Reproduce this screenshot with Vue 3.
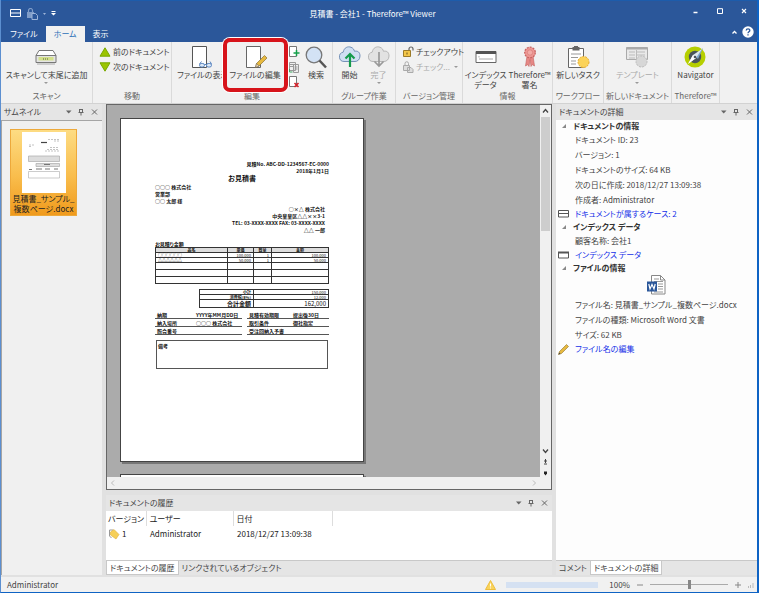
<script setup>
import { ref } from 'vue'

const tabs = ['ファイル', 'ホーム', '表示']
const activeTab = ref('ホーム')
const zoom = ref(50)
const details = [
  {
    title: 'ドキュメントの情報',
    items: ['ドキュメント ID: 23', 'バージョン: 1', 'ドキュメントのサイズ: 64 KB', '次の日に作成: 2018/12/27 13:09:38', '作成者: Administrator'],
    link: 'ドキュメントが属するケース: 2',
    icon: 'case'
  },
  { title: 'インデックス データ', items: ['顧客名称:  会社1'], link: 'インデックス データ', icon: 'index' },
  {
    title: 'ファイルの情報',
    word: true,
    items: ['ファイル名: 見積書_サンプル_複数ページ.docx', 'ファイルの種類: Microsoft Word 文書', 'サイズ: 62 KB'],
    link: 'ファイル名の編集',
    icon: 'pencil'
  }
]
const lines = [
  ['○○○○○○', '100,000', '1', '100,000'],
  ['△△△△△△', '50,000', '1', '50,000']
]
const terms = [
  [['納期', 'YYYY年MM月DD日'], ['納入場所', '○○○ 株式会社'], ['照会番号', '']],
  [['見積有効期限', '提出後30日'], ['取引条件', '御社指定'], ['受注回納入予書', '']]
]
</script>

<template>
  <div class="window">
    <header class="titlebar">
      <div class="quick">
        <button class="bare" aria-label="ケース">
          <svg width="11" height="9" viewBox="0 0 11 9" fill="none" stroke="#fff"><path d="M.5.5h10v7H.5zM.5 4h10" /></svg>
        </button>
        <button class="bare" aria-label="チェックイン">
          <svg width="12" height="12" viewBox="0 0 12 12"><path d="M2.500 5V2.500a2 2 0 0 1 4 0V5" fill="none" stroke="#7f9cc8" stroke-width="1.200" /><path d="M1 4h7v6H1z" fill="#7f9cc8" /><path d="M6 5.500h3.500l2 2v4H6z" fill="#2b579a" stroke="#9db4d8" /></svg>
        </button>
        <svg width="3" height="2" viewBox="0 0 3 2"><path d="M0 0h3L1.500 2z" fill="#9db4d8" /></svg>
        <button class="bare" aria-label="カスタマイズ">
          <svg width="5" height="5" viewBox="0 0 5 5" fill="#fff"><path d="M.5 0h4v1h-4zM0 2h5L2.500 4.500z" /></svg>
        </button>
      </div>
      <div class="caption">見積書 - 会社1 - Therefore™ Viewer</div>
      <div class="winbtns">
        <button class="bare" aria-label="最小化"><svg width="6" height="6" viewBox="0 0 6 6"><path d="M.5 4.500h4" stroke="#fff" stroke-width="1.500" /></svg></button>
        <button class="bare" aria-label="最大化"><svg width="6" height="6" viewBox="0 0 6 6"><path d="M.5.7h5v4.800h-5z" fill="none" stroke="#fff" /></svg></button>
        <button class="bare" aria-label="閉じる"><svg width="6" height="6" viewBox="0 0 6 6"><path d="M1 1l4 4M5 1L1 5" stroke="#fff" stroke-width="1.100" /></svg></button>
      </div>
    </header>

    <nav class="tabbar">
      <button v-for="t in tabs" :key="t" class="tab" :class="{ active: t === activeTab }" @click="activeTab = t">{{ t }}</button>
      <div class="help">
        <button class="bare" aria-label="リボンを折りたたむ"><svg width="5" height="4" viewBox="0 0 5 4"><path d="M.5 3.500l2-2 2 2" fill="none" stroke="#fff" stroke-width="1.300" /></svg></button>
        <button class="bare" aria-label="ヘルプ"><svg width="12" height="12" viewBox="0 0 12 12"><circle cx="6" cy="6" r="5.700" fill="#fff" /><path d="M4.200 4.500c.1-2.200 3.700-2.100 3.600 0C7.800 5.800 6 5.800 6 7.300M6 8.300v1.200" fill="none" stroke="#2b579a" stroke-width="1.300" /></svg></button>
      </div>
    </nav>

    <section class="ribbon">
      <div class="group g-scan">
        <div class="tools">
          <button class="big">
            <svg width="22" height="24" viewBox="0 0 22 24"><path d="M4 4.500h14l3 5H1z" fill="#fff" stroke="#777" /><path d="M1 9.500h20v7H1z" fill="#e4e4e4" stroke="#777" /><path d="M3.500 11h15v3.500h-15z" fill="#d3e08a" /><path d="M8 13h6" stroke="#55603a" stroke-dasharray="1 1" /><path d="M2 18h18" stroke="#aaa" /></svg>
            <span>スキャンして末尾に追加</span><i class="drop"></i>
          </button>
        </div>
        <h2>スキャン</h2>
      </div>
      <div class="group g-move">
        <div class="tools stack">
          <button class="small"><svg width="12" height="10" viewBox="0 0 12 10"><path d="M6 .8l5 8.400H1z" fill="#9bc400" stroke="#78a800" /></svg>前のドキュメント</button>
          <button class="small"><svg width="12" height="10" viewBox="0 0 12 10"><path d="M6 9.200l5-8.400H1z" fill="#9bc400" stroke="#78a800" /></svg>次のドキュメント</button>
        </div>
        <h2>移動</h2>
      </div>
      <div class="group g-edit">
        <div class="tools">
          <button class="big view">
            <svg width="24" height="24" viewBox="0 0 24 24"><path d="M4.500 .5h14v21h-14z" fill="#fff" stroke="#555" /><path d="M13.500 15.500l-2 2.500M22 15.500l1.500 2.500" fill="none" stroke="#5a86c0" /><rect x="11.500" y="17.500" width="5" height="3.500" rx="1.700" fill="#dce8f6" stroke="#5a86c0" /><rect x="18.500" y="17.500" width="5" height="3.500" rx="1.700" fill="#dce8f6" stroke="#5a86c0" /><path d="M16.500 18.500h2" stroke="#5a86c0" /></svg>
            <span>ファイルの表示</span>
          </button>
          <button class="big marked">
            <svg width="24" height="24" viewBox="0 0 24 24"><path d="M3.500 .5h14v21h-14z" fill="#fff" stroke="#666" /><path d="M12.500 21.500l1-4 8-8 2.500 2.500-8 8z" fill="#e7b93f" stroke="#8b7132" stroke-width=".7" /><path d="M12.500 21.500l1-4 2.700 2.600z" fill="#eed8b0" stroke="#555" stroke-width=".5" /></svg>
            <span>ファイルの編集</span>
          </button>
          <div class="mini">
            <button class="bare" aria-label="ページの追加"><svg width="12" height="13" viewBox="0 0 12 13"><path d="M1.500 .5h7v10h-7z" fill="#fff" stroke="#777" /><path d="M8.500 4v6M5.500 7h6" stroke="#14a04a" stroke-width="1.500" /></svg></button>
            <button class="bare" aria-label="ページの置換"><svg width="12" height="13" viewBox="0 0 12 13"><path d="M1.500 1.500h6v8h-6zM5.500 3.500h5v8h-5z" fill="#eee" stroke="#999" /><path d="M2 3.500h4M2 5.500h3M6.500 6h3M6.500 8h3" stroke="#999" /><path d="M1.500 8v3h3" fill="none" stroke="#3da461" /></svg></button>
            <button class="bare" aria-label="ページの削除"><svg width="12" height="13" viewBox="0 0 12 13"><path d="M1.500 .5h7v10h-7z" fill="#fff" stroke="#777" /><path d="M6.500 7l4 4M10.500 7l-4 4" stroke="#d5202a" stroke-width="1.600" /></svg></button>
          </div>
          <button class="big find">
            <svg width="24" height="24" viewBox="0 0 24 24"><circle cx="10" cy="9" r="7.800" fill="#d3e2f5" stroke="#777" stroke-width="1.300" /><path d="M15.500 14.500l6.500 7" stroke="#555" stroke-width="2.500" /></svg>
            <span>検索</span>
          </button>
        </div>
        <h2>編集</h2>
      </div>
      <div class="group g-work">
        <div class="tools">
          <button class="big">
            <svg width="24" height="24" viewBox="0 0 24 24"><path d="M6 15.500a4.700 4.700 0 0 1-.8-9.300C6 1.500 10 0 13 1.300c2 .6 3 2.200 3.500 4 3.500-.8 5.500 1.200 5.500 4.700s-2.500 5.500-5 5.500z" fill="#cfdff2" stroke="#7692b8" /><path d="M12 21V9M7.500 12.500L12 8l4.500 4.500" fill="none" stroke="#159a4c" stroke-width="2.200" /></svg>
            <span>開始</span>
          </button>
          <button class="big off" disabled>
            <svg width="24" height="24" viewBox="0 0 24 24"><path d="M6 15.500a4.700 4.700 0 0 1-.8-9.300C6 1.500 10 0 13 1.300c2 .6 3 2.200 3.500 4 3.500-.8 5.500 1.200 5.500 4.700s-2.500 5.500-5 5.500z" fill="#e2e2e2" stroke="#b6b6b6" /><path d="M12 6v13M7.500 15.500L12 20l4.500-4.500" fill="none" stroke="#999" stroke-width="1.700" /></svg>
            <span>完了</span><i class="drop"></i>
          </button>
        </div>
        <h2>グループ作業</h2>
      </div>
      <div class="group g-version">
        <div class="tools stack">
          <button class="small"><svg width="12" height="12" viewBox="0 0 12 12"><path d="M7 5V3a2 2 0 0 1 4 0v1.500" fill="none" stroke="#666" stroke-width="1.200" /><path d="M1.500 4.500h7v6h-7z" fill="#f3c649" stroke="#9b7a28" /><path d="M5 6.500v2" stroke="#6b531a" /></svg>チェックアウト</button>
          <button class="small off" disabled><svg width="12" height="12" viewBox="0 0 12 12" fill="#ddd" stroke="#aaa"><path d="M3 5V2.500a1.700 1.700 0 0 1 3.500 0V5" fill="none" /><path d="M1.500 4.500h6v5h-6zM5.500 6.500h3.500l2 2v3H5.500z" /></svg>チェック... <i class="drop side"></i></button>
        </div>
        <h2>バージョン管理</h2>
      </div>
      <div class="group g-info">
        <div class="tools">
          <button class="big">
            <svg width="22" height="24" viewBox="0 0 22 24"><path d="M1 5.500h20v11H1z" fill="#fff" stroke="#666" /><path d="M1 5h20v3H1z" fill="#555" /><path d="M4 10v1.500M4 13h14" stroke="#aaa" /></svg>
            <span>インデックス<br>データ</span>
          </button>
          <button class="big">
            <svg width="16" height="24" viewBox="0 0 16 24"><path d="M5 10l-1.500 10 2.500-1.500 1 2 1-7 1 7 1-2 2.500 1.500L11 10z" fill="#e68885" stroke="#c2625f" stroke-width=".6" /><circle cx="8" cy="6.500" r="5.300" fill="#ee9793" stroke="#c76462" stroke-width="1.300" stroke-dasharray="2 1" /><circle cx="8" cy="6.500" r="2.700" fill="#f2aaa6" stroke="#d37572" stroke-width=".6" /></svg>
            <span>Therefore™<br>署名</span>
          </button>
        </div>
        <h2>情報</h2>
      </div>
      <div class="group g-flow">
        <div class="tools">
          <button class="big">
            <svg width="24" height="24" viewBox="0 0 24 24"><path d="M2.500 2.500h15v19h-15z" fill="#fff" stroke="#666" /><path d="M6.500 1h7v3.500h-7z" fill="#666" /><path d="M8 .5h4" stroke="#666" /><path d="M5 8h10M5 11.500h7M5 15h5M5 18h5" stroke="#999" /><circle cx="17.500" cy="16" r="5.500" fill="#fbd35a" stroke="#e5a92b" stroke-dasharray="2 1" /></svg>
            <span>新しいタスク</span>
          </button>
        </div>
        <h2>ワークフロー</h2>
      </div>
      <div class="group g-new">
        <div class="tools">
          <button class="big off" disabled>
            <svg width="24" height="24" viewBox="0 0 24 24"><path d="M1.500 1.500h21v12h-21z" fill="#e9e9e9" stroke="#aaa" /><path d="M1.500 2.500h21" stroke="#aaa" stroke-width="2" /><path d="M4 6h6M4 9h6M4 12h6M12 6h8M12 9h8M11.500 4v9" stroke="#bbb" /><circle cx="16.500" cy="15.500" r="5.500" fill="#d7d7d7" stroke="#bbb" stroke-dasharray="2 1" /></svg>
            <span>テンプレート</span><i class="drop"></i>
          </button>
        </div>
        <h2>新しいドキュメント</h2>
      </div>
      <div class="group g-nav">
        <div class="tools">
          <button class="big">
            <svg width="24" height="24" viewBox="0 0 24 24"><circle cx="12" cy="11" r="10.500" fill="#b6cf00" /><circle cx="12" cy="11" r="6.200" fill="#4b555b" /><path d="M20 2l-5 11-3.500-3.500z" fill="#7ea6ce" /><path d="M19 3l-9 6-5 9 8-6z" fill="#dfe8ef" /><path d="M5 18l5-9 3 3z" fill="#fff" /><circle cx="12" cy="11" r="1.300" fill="#4b555b" /></svg>
            <span>Navigator</span>
          </button>
        </div>
        <h2>Therefore™</h2>
      </div>
    </section>

    <main class="body">
      <aside class="thumbs">
        <div class="panelhead"><h3>サムネイル</h3>
          <svg class="ctl" width="32" height="8" viewBox="0 0 32 8" fill="none" stroke="#666"><path d="M0 2.500h5.500L2.700 5.500z" fill="#666" stroke="none" /><path d="M13.500 1v3.500M16.500 1v3.500M13.500 1.500h3M12.500 4.500h5M15 4.500v3" /><path d="M26 1.500l5 5M31 1.500l-5 5" /></svg>
        </div>
        <div class="thumblist">
          <button class="thumb">
            <svg width="44" height="61" viewBox="0 0 44 61"><path d="M0 0h44v61H0z" fill="#fff" /><path d="M19 10.500h6" stroke="#444" stroke-width="1.200" /><path d="M26 7.500h12M32 9h6M7 13h5M7 14.500h3M28 15.500h9M25 17.500h12M23 19h14" stroke="#aaa" stroke-width=".7" stroke-dasharray="2 1" /><path d="M6.500 24h31v5.500h-31zM14 31.500h23.500v3H14z" fill="#ddd" stroke="#aaa" stroke-width=".7" /><path d="M7 37.500h3M14 37h6M23 37h5M32 37h4M22 32.500h6" stroke="#777" stroke-width="1" /><path d="M6.500 39.500h31v6.500h-31z" fill="#fff" stroke="#aaa" stroke-width=".6" /></svg>
            <span>見積書_サンプル_<br>複数ページ.docx</span>
          </button>
        </div>
      </aside>

      <div class="center">
        <section class="viewer">
          <div class="canvas">
            <article class="sheet">
              <p class="right">見積No. ABC-DD-1234567-EC-0000<br>2018年1月1日</p>
              <h1>お見積書</h1>
              <p>○○○ 株式会社<br>営業部<br>○○ 太郎 様</p>
              <p class="right sender">○×△ 株式会社<br>中央皇皇区△△××3-1<br>TEL: 03-XXXX-XXXX FAX: 03-XXXX-XXXX<br>△△ 一郎</p>
              <p class="sub">お見積り金額</p>
              <table class="items">
                <thead><tr><th>品名</th><th>単価</th><th>数量</th><th>金額</th></tr></thead>
                <tbody>
                  <tr v-for="l in lines" :key="l[0]"><td>{{ l[0] }}</td><td>{{ l[1] }}</td><td>{{ l[2] }}</td><td>{{ l[3] }}</td></tr>
                  <tr v-for="n in 3" :key="n" class="blank"><td></td><td></td><td></td><td></td></tr>
                </tbody>
              </table>
              <table class="totals">
                <tbody>
                  <tr><th>小計</th><td>150,000</td></tr>
                  <tr><th>消費税(8%)</th><td>12,000</td></tr>
                  <tr class="grand"><th>合計金額</th><td>162,000</td></tr>
                </tbody>
              </table>
              <div class="terms">
                <dl v-for="(side, i) in terms" :key="i">
                  <div v-for="t in side" :key="t[0]"><dt>{{ t[0] }}</dt><dd>{{ t[1] }}</dd></div>
                </dl>
              </div>
              <div class="remarks">備考</div>
            </article>
            <article class="sheet next"></article>
          </div>
          <div class="vbar">
            <svg width="7" height="12" viewBox="0 0 7 12"><path d="M1 7.500l2.500-3 2.500 3" fill="none" stroke="#444" stroke-width="1.300" /></svg>
            <div class="grip"></div>
            <svg width="7" height="30" viewBox="0 0 7 30" fill="none" stroke="#444"><path d="M1 2.500l2.500 3 2.500-3" stroke-width="1.300" /><path d="M2 14h3M3.500 12v4M2 17h3" /><path d="M2 24.500h3v2l-1.500 2-1.500-2z" fill="#222" stroke="none" /></svg>
          </div>
          <div class="hbar">
            <svg width="6" height="8" viewBox="0 0 6 8"><path d="M4 1.500L1.500 4 4 6.500" fill="none" stroke="#bbb" /></svg>
            <svg width="6" height="8" viewBox="0 0 6 8"><path d="M2 1.500L4.500 4 2 6.500" fill="none" stroke="#bbb" /></svg>
          </div>
        </section>
        <section class="history">
          <div class="panelhead"><h3>ドキュメントの履歴</h3>
            <svg class="ctl" width="32" height="8" viewBox="0 0 32 8" fill="none" stroke="#666"><path d="M0 2.500h5.500L2.700 5.500z" fill="#666" stroke="none" /><path d="M13.500 1v3.500M16.500 1v3.500M13.500 1.500h3M12.500 4.500h5M15 4.500v3" /><path d="M26 1.500l5 5M31 1.500l-5 5" /></svg>
          </div>
          <div class="historybody">
            <table class="versions">
              <thead><tr><th>バージョン</th><th>ユーザー</th><th>日付</th></tr></thead>
              <tbody><tr><td><svg width="12" height="12" viewBox="0 0 12 12"><path d="M5 2H1.500v6l2 2" fill="none" stroke="#999" /><path d="M2.500 4L6 1.500l5 5L8 11l-5.500-4z" fill="#f6cf57" stroke="#dfae37" stroke-width=".6" /></svg>1</td><td>Administrator</td><td>2018/12/27 13:09:38</td></tr></tbody>
            </table>
          </div>
          <div class="foottabs"><button class="on">ドキュメントの履歴</button><button>リンクされているオブジェクト</button></div>
        </section>
      </div>

      <aside class="details">
        <div class="panelhead"><h3>ドキュメントの詳細</h3>
          <svg class="ctl" width="32" height="8" viewBox="0 0 32 8" fill="none" stroke="#666"><path d="M0 2.500h5.500L2.700 5.500z" fill="#666" stroke="none" /><path d="M13.500 1v3.500M16.500 1v3.500M13.500 1.500h3M12.500 4.500h5M15 4.500v3" /><path d="M26 1.500l5 5M31 1.500l-5 5" /></svg>
        </div>
        <div class="detailbody">
          <section v-for="d in details" :key="d.title">
            <h4><svg width="4" height="4" viewBox="0 0 4 4"><path d="M4 0v4H0z" fill="#888" /></svg>{{ d.title }}</h4>
            <div v-if="d.word" class="word">
              <svg width="19" height="20" viewBox="0 0 19 20"><path d="M4.500.5h9l4.500 4.500v14H4.500z" fill="#fff" stroke="#888" /><path d="M13.500.5v4.500H18" fill="none" stroke="#888" /><path d="M7 4h5M7 6.500h9M11 9h5M11 11.500h5M11 14h5M7 17h9" stroke="#999" /><path d="M0 6.500h10v10H0z" fill="#2b579a" /><path d="M1.800 9l1.200 5 2-4.500 2 4.500 1.200-5" fill="none" stroke="#fff" stroke-width="1.200" /></svg>
            </div>
            <p v-for="t in d.items" :key="t">{{ t }}</p>
            <a href="#">
              <svg v-if="d.icon === 'case'" width="11" height="8" viewBox="0 0 11 8" fill="#fff" stroke="#555"><path d="M.5.5h10v6.500H.5zM.5 3.500h10" /></svg>
              <svg v-else-if="d.icon === 'index'" width="11" height="8" viewBox="0 0 11 8" fill="#fff" stroke="#555"><path d="M.5 1.500h10v5.500H.5z" /><path d="M0 1.500h11" stroke-width="2" /></svg>
              <svg v-else width="11" height="11" viewBox="0 0 11 11"><path d="M.5 10.500l1-3L8.500.5l2 2-7 7z" fill="#e7b93f" stroke="#9d833e" stroke-width=".7" /><path d="M.5 10.500l.7-2 1.300 1.200z" fill="#444" /></svg>
              {{ d.link }}
            </a>
          </section>
        </div>
        <div class="foottabs"><button>コメント</button><button class="on">ドキュメントの詳細</button></div>
      </aside>
    </main>

    <footer class="status">
      <span class="user">Administrator</span>
      <svg class="warn" width="11" height="10" viewBox="0 0 11 10"><path d="M5.500.5l5 9h-10z" fill="#f9d45d" stroke="#edbd3d" /><path d="M5.500 3.500v3M5.500 7.500v1" stroke="#fff" /></svg>
      <div class="progress" role="progressbar" aria-label="進行状況"></div>
      <output>100%</output>
      <button class="bare" aria-label="縮小"><svg width="6" height="6" viewBox="0 0 6 6"><path d="M0 3h6" stroke="#888" /></svg></button>
      <input v-model="zoom" type="range" min="0" max="100" aria-label="ズーム">
      <button class="bare" aria-label="拡大"><svg width="6" height="6" viewBox="0 0 6 6"><path d="M0 3h6M3 0v6" stroke="#888" /></svg></button>
      <svg width="6" height="6" viewBox="0 0 6 6"><path d="M.5 4v2M2.500 3v3M5 1v5" stroke="#bbb" /></svg>
    </footer>
  </div>
</template>

<style>
body { margin: 0; }
</style>

<style scoped>
*, *::after { box-sizing: border-box; }
.window {
  height: 100vh;
  display: flex;
  flex-direction: column;
  font: 8px/10px "Noto Sans CJK JP", sans-serif;
  font-feature-settings: "palt";
  color: #444;
  background: #e5e5e5;
  border-right: 2px solid #0f63c4;
  border-bottom: 1px solid #0f63c4;
  border-left: 1px solid #5c8fd0;
  overflow: hidden;
}
h1, h2, h3, h4, p, dl, dd { margin: 0; font-weight: 400; font-size: inherit; }
svg { display: block; flex: none; }
button { font: inherit; color: inherit; font-feature-settings: inherit; padding: 0; border: 0; background: none; white-space: nowrap; }
.bare { display: flex; }
.titlebar { height: 26px; flex: none; display: grid; grid-template-columns: 1fr auto 1fr; align-items: center; background: #2b579a; color: #fff; border-top: 1px solid #1d5cab; padding: 0 10px 0 9px; }
.quick { display: flex; align-items: center; gap: 5px; }
.caption { padding-right: 12px; }
.winbtns { display: flex; justify-content: flex-end; gap: 18px; padding-bottom: 6px; }
.tabbar { height: 16px; flex: none; display: flex; align-items: stretch; background: #2b579a; color: #fff; padding-left: 1px; }
.tab { padding: 0 8px; }
.tab.active { background: #f1f1f1; color: #2b70b8; }
.help { margin-left: auto; display: flex; align-items: center; gap: 5px; padding: 0 3px 6px 0; align-self: flex-start; }

.ribbon { height: 62px; flex: none; display: flex; background: #f1f1f1; border-bottom: 1px solid #d2d2d2; }
.group { display: flex; flex-direction: column; justify-content: space-between; border-right: 1px solid #dadada; padding: 4px 0 2px; }
.group h2 { text-align: center; color: #666; white-space: nowrap; line-height: 11px; }
.g-scan { width: 92px; } .g-move { width: 79px; } .g-edit { width: 161px; } .g-work { width: 63px; }
.g-version { width: 67px; } .g-info { width: 90px; } .g-flow { width: 51px; } .g-new { width: 68px; } .g-nav { width: 48px; }
.tools { display: flex; justify-content: center; height: 43px; align-items: flex-start; }
.big { display: flex; flex-direction: column; align-items: center; position: relative; line-height: 10px; }
.drop { width: 0; border: 2px solid transparent; border-top-color: #999; border-bottom: 0; margin-top: 2px; }
.drop.side { margin: 0 0 0 2px; }
.off { color: #aaa; }
.stack { flex-direction: column; justify-content: flex-start; gap: 4px; padding-left: 6px; }
.small { display: flex; align-items: center; gap: 2px; height: 11px; }
.g-edit .tools { justify-content: flex-start; padding-left: 5px; }
.view { width: 46px; align-items: flex-start; overflow: hidden; }
.view svg { margin-left: 11px; }
.marked { width: 64px; }
.marked::after { content: ""; position: absolute; left: 0; top: -8px; width: 65px; height: 54px; border: 4px solid #d7141b; border-radius: 7px; box-shadow: 0 0 0 1px #fff; }
.mini { display: flex; flex-direction: column; gap: 2px; height: 43px; margin-left: 1px; }
.find { width: 30px; margin-left: 1px; }
.g-work .tools { gap: 5px; }
.g-info .tools { gap: 2px; }

.body { flex: 1; min-height: 0; display: grid; grid-template-columns: 101px minmax(0, 1fr) 201px; column-gap: 4px; background: #e1e1e1; padding-bottom: 2px; }
.panelhead { height: 16px; flex: none; display: flex; align-items: center; justify-content: space-between; background: #e5e5e5; padding: 0 4px 0 3px; }
.thumbs, .center, .details { display: flex; flex-direction: column; min-height: 0; }
.thumblist { flex: 1; background: #f0f0f0; border: 1px solid #a5a5a5; border-width: 1px 0 0 1px; padding: 8px; }
.thumb { width: 67px; height: 87px; display: flex; flex-direction: column; align-items: center; justify-content: space-between; padding: 2px 0 1px; border: 1px solid #eda93b; background: linear-gradient(#fddc83, #f9bd4c 55%, #f09a1c); color: #222; line-height: 10px; }
.viewer { flex: 1; min-height: 0; display: grid; grid-template: minmax(0, 1fr) 12px / minmax(0, 1fr) 11px; border: 1px solid #666; background: #f0f0f0; }
.canvas { background: #ababab; overflow: hidden; padding: 13px 13px 0; }
.vbar { grid-row: 1 / 3; grid-column: 2; display: flex; flex-direction: column; align-items: center; padding-bottom: 12px; }
.grip { width: 9px; flex: 1; margin-bottom: 216px; background: #cdcdcd; }
.hbar { grid-row: 2; grid-column: 1; display: flex; align-items: center; justify-content: space-between; padding: 0 3px; }

.sheet { width: 244px; height: 344px; background: #fff; border: 1px solid #444; box-shadow: 2px 2px 0 #777; padding: 41px 34px 0; color: #111; font-size: 5px; font-weight: 700; line-height: 7px; margin-bottom: 12px; }
.sheet p, .sheet dt, .sheet dd { font-weight: 700; white-space: nowrap; }
.sheet .right { text-align: right; }
.sheet h1 { font-size: 7px; font-weight: 700; text-align: center; line-height: 9px; }
.sheet .sender { padding: 1px 4px 0 0; }
.sheet .sub { padding-top: 7px; line-height: 7px; }
.sheet table { border-collapse: collapse; table-layout: fixed; font-size: 4px; line-height: 4px; }
.sheet td, .sheet th { border: 1px solid #333; padding: 0 2px; white-space: nowrap; }
.sheet td { text-align: right; font-weight: 400; }
.items { width: 100%; }
.items th { background: #ddd; width: 18px; }
.items th:first-child { width: 72px; }
.items th:nth-child(2) { width: 26px; }
.items th:last-child { width: auto; }
.items td:first-child { text-align: left; }
.items .blank td { height: 7px; }
.totals { width: 130px; margin: 5px 0 0 auto; }
.totals th { width: 54px; text-align: right; }
.totals .grand { font-size: 6px; line-height: 7px; }
.terms { display: grid; grid-template-columns: 87px 1fr; column-gap: 5px; margin-top: 3px; }
.terms div { display: grid; grid-template-columns: 39px 1fr; border-bottom: 1px solid #555; line-height: 7px; padding-left: 2px; }
.terms dl:last-child div { grid-template-columns: 44px 1fr; }
.remarks { height: 29px; border: 1px solid #555; margin: 5px 1px 0; padding: 1px; }

.history { display: flex; flex-direction: column; margin-top: 5px; flex: none; }
.historybody { background: #fff; height: 49px; }
.versions { border-collapse: collapse; table-layout: fixed; width: 227px; color: #222; }
.versions th { height: 15px; text-align: left; font-weight: 400; padding: 0 3px; border-right: 1px solid #ddd; }
.versions td { height: 15px; padding: 0 4px; }
.versions th:first-child { width: 40px; padding: 0 0 0 2px; }
.versions th:nth-child(2) { width: 87px; }
.versions td:first-child { display: flex; align-items: center; gap: 2px; padding: 0 2px; }
.foottabs { display: flex; height: 15px; flex: none; border-top: 1px solid #c8c8c8; background: #e5e5e5; }
.foottabs button { padding: 0 3px; }
.foottabs .on { background: #fff; border: 1px solid #c8c8c8; border-top: 0; }

.detailbody { flex: 1; background: #fdfdfd; }
.detailbody h4 { height: 12px; line-height: 12px; font-weight: 700; display: flex; align-items: center; gap: 7px; padding-left: 6px; color: #333; }
.detailbody p { line-height: 15px; padding-left: 19px; white-space: nowrap; }
.detailbody a { height: 14px; display: flex; align-items: center; gap: 6px; padding-left: 2px; color: #1430e8; text-decoration: none; white-space: nowrap; }
.word { height: 23px; padding-top: 1px; display: flex; justify-content: center; }

.status { height: 15px; flex: none; display: flex; align-items: center; gap: 7px; background: #f1f1f1; padding: 0 3px 0 6px; }
.user { margin-right: auto; }
.warn { margin-right: 3px; }
.progress { width: 92px; height: 6px; background: #d5e1f2; }
.status output { margin-left: 4px; }
.status input { width: 78px; height: 10px; margin: 0; appearance: none; background: linear-gradient(#aaa, #aaa) center / 100% 1px no-repeat; }
.status input::-webkit-slider-thumb { appearance: none; width: 3px; height: 9px; background: #888; }
</style>
